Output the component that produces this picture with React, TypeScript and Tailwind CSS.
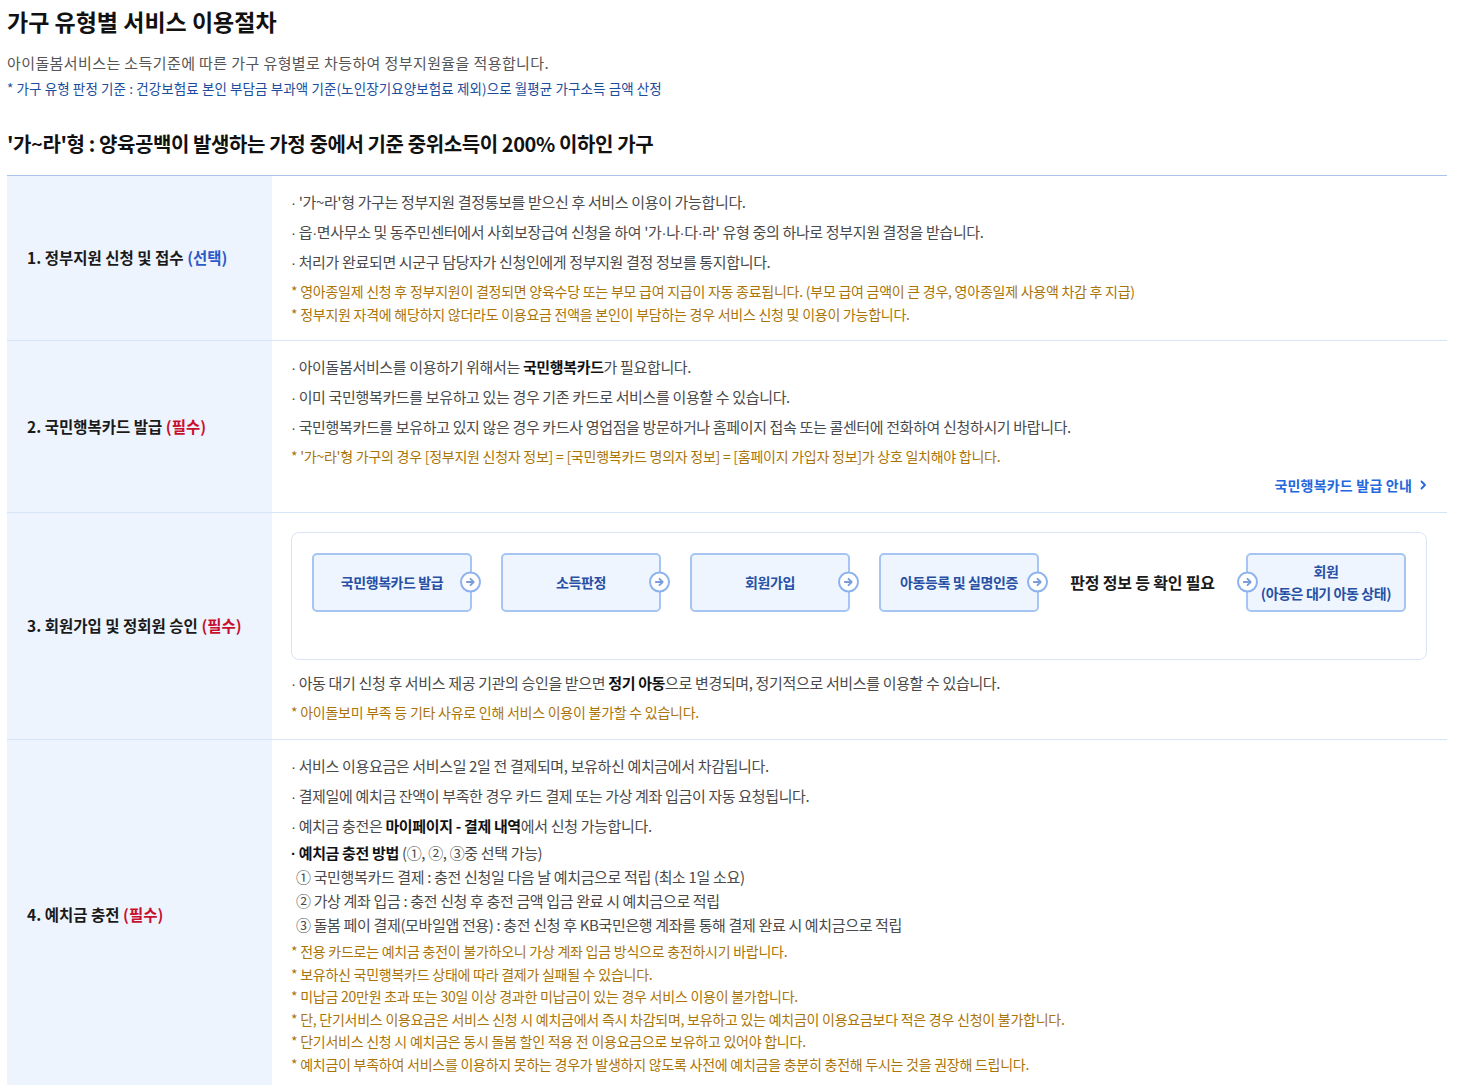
import React from "react";

function Dot() {
  return <span className="font-['Liberation_Sans',sans-serif] leading-none">·</span>;
}

function Bullet({ children }: { children: React.ReactNode }) {
  return (
    <p className="h-[30px] leading-[30px] text-[15px] tracking-[-0.35px] text-[#4a4a4a]">
      <Dot /> {children}
    </p>
  );
}

function Note({ children }: { children: React.ReactNode }) {
  return <p className="leading-[22.5px] text-[14px] tracking-[-0.25px] text-[#aa7407]">* {children}</p>;
}

function ArrowCircle({ side }: { side: "left" | "right" }) {
  return (
    <span
      className={
        "absolute top-1/2 -translate-y-1/2 w-[21px] h-[21px] rounded-full bg-white border-2 border-[#8db2ef] flex items-center justify-center " +
        (side === "right" ? "-right-[11px]" : "-left-[11px]")
      }
    >
      <svg width="11" height="11" viewBox="0 0 12 12" fill="none">
        <path d="M2 6h7.5M6 2.5L9.5 6 6 9.5" stroke="#7a9cd8" strokeWidth="2" strokeLinecap="round" strokeLinejoin="round" />
      </svg>
    </span>
  );
}

function FlowBox({ children, arrow }: { children: React.ReactNode; arrow: "left" | "right" }) {
  return (
    <div className="relative w-[160px] h-[59px] shrink-0 rounded-[5px] border-2 border-[#a7c5f3] bg-[#eef5ff] flex items-center justify-center text-center text-[14px] font-bold leading-[22px] tracking-[-0.4px] text-[#2750a5]">
      {children}
      <ArrowCircle side={arrow} />
    </div>
  );
}

function Row({ label, tag, tagColor, children, className }: { label: string; tag: string; tagColor: string; children: React.ReactNode; className?: string }) {
  return (
    <div className="flex border-b border-[#d6e4f8]">
      <div className="w-[265px] shrink-0 bg-[#edf4fe] flex items-center pl-5 text-[15.5px] font-bold text-[#1a1a1a]">
        {label}&nbsp;<span className={tagColor}>{tag}</span>
      </div>
      <div className={"flex-1 pl-[19px] pr-5 " + (className ?? "pt-[11px] pb-[15px]")}>{children}</div>
    </div>
  );
}

export default function App() {
  return (
    <div className="font-['Noto_Sans_CJK_KR','Noto_Sans',sans-serif] bg-white w-[1461px] min-h-[1085px] pl-[7px] pr-[14px] pt-[5px] text-[#111]">
      <h1 className="text-[23px] font-bold leading-[32px] text-[#111]">가구 유형별 서비스 이용절차</h1>
      <p className="mt-[15px] text-[15px] tracking-[0.4px] leading-[22px] text-[#555]">
        아이돌봄서비스는 소득기준에 따른 가구 유형별로 차등하여 정부지원율을 적용합니다.
      </p>
      <p className="mt-[4px] text-[13.5px] tracking-[0.1px] leading-[20px] text-[#1b4d9c]">
        * 가구 유형 판정 기준 : 건강보험료 본인 부담금 부과액 기준(노인장기요양보험료 제외)으로 월평균 가구소득 금액 산정
      </p>
      <h2 className="mt-[31px] text-[20px] font-bold tracking-[-0.4px] leading-[30px] text-[#111]">
        '가~라'형 : 양육공백이 발생하는 가정 중에서 기준 중위소득이 200% 이하인 가구
      </h2>

      <div className="mt-[16px] border-t border-[#a9c4ec]">
        <Row label="1. 정부지원 신청 및 접수" tag="(선택)" tagColor="text-[#2d59c8]">
          <Bullet>'가~라'형 가구는 정부지원 결정통보를 받으신 후 서비스 이용이 가능합니다.</Bullet>
          <Bullet>
            읍<Dot />면사무소 및 동주민센터에서 사회보장급여 신청을 하여 '가<Dot />나<Dot />다<Dot />라' 유형 중의 하나로 정부지원 결정을 받습니다.
          </Bullet>
          <Bullet>처리가 완료되면 시군구 담당자가 신청인에게 정부지원 결정 정보를 통지합니다.</Bullet>
          <div className="mt-[3px]">
            <Note>영아종일제 신청 후 정부지원이 결정되면 양육수당 또는 부모 급여 지급이 자동 종료됩니다. (부모 급여 금액이 큰 경우, 영아종일제 사용액 차감 후 지급)</Note>
            <Note>정부지원 자격에 해당하지 않더라도 이용요금 전액을 본인이 부담하는 경우 서비스 신청 및 이용이 가능합니다.</Note>
          </div>
        </Row>

        <Row label="2. 국민행복카드 발급" tag="(필수)" tagColor="text-[#c8102e]" className="pt-[11px] pb-[12px]">
          <Bullet>
            아이돌봄서비스를 이용하기 위해서는 <b className="text-[#111]">국민행복카드</b>가 필요합니다.
          </Bullet>
          <Bullet>이미 국민행복카드를 보유하고 있는 경우 기존 카드로 서비스를 이용할 수 있습니다.</Bullet>
          <Bullet>국민행복카드를 보유하고 있지 않은 경우 카드사 영업점을 방문하거나 홈페이지 접속 또는 콜센터에 전화하여 신청하시기 바랍니다.</Bullet>
          <div className="mt-[3px]">
            <Note>'가~라'형 가구의 경우 [정부지원 신청자 정보] = [국민행복카드 명의자 정보] = [홈페이지 가입자 정보]가 상호 일치해야 합니다.</Note>
          </div>
          <div className="flex justify-end leading-[30px] mt-[2px]">
            <span className="text-[14px] font-bold tracking-[0.2px] text-[#2368dc] flex items-center gap-[8px]">
              국민행복카드 발급 안내
              <svg width="7" height="10" viewBox="0 0 7 10" fill="none">
                <path d="M1.5 1.5L5 5l-3.5 3.5" stroke="#2368dc" strokeWidth="1.8" strokeLinecap="round" strokeLinejoin="round" />
              </svg>
            </span>
          </div>
        </Row>

        <Row label="3. 회원가입 및 정회원 승인" tag="(필수)" tagColor="text-[#c8102e]" className="pt-[19px] pb-[16px]">
          <div className="rounded-[8px] border border-[#d9e5f7] px-5 pt-5 pb-[47px] flex items-center gap-[29px]">
            <FlowBox arrow="right">국민행복카드 발급</FlowBox>
            <FlowBox arrow="right">소득판정</FlowBox>
            <FlowBox arrow="right">회원가입</FlowBox>
            <FlowBox arrow="right">아동등록 및 실명인증</FlowBox>
            <div className="flex-1 text-center text-[16px] font-bold tracking-[-0.2px] text-[#1a1a1a]">판정 정보 등 확인 필요</div>
            <FlowBox arrow="left">
              회원
              <br />
              (아동은 대기 아동 상태)
            </FlowBox>
          </div>
          <div className="mt-[8px]">
            <Bullet>
              아동 대기 신청 후 서비스 제공 기관의 승인을 받으면 <b className="text-[#111]">정기 아동</b>으로 변경되며, 정기적으로 서비스를 이용할 수 있습니다.
            </Bullet>
            <div className="mt-[3px]">
              <Note>아이돌보미 부족 등 기타 사유로 인해 서비스 이용이 불가할 수 있습니다.</Note>
            </div>
          </div>
        </Row>

        <Row label="4. 예치금 충전" tag="(필수)" tagColor="text-[#c8102e]" className="pt-[11px] pb-[15px]">
          <Bullet>서비스 이용요금은 서비스일 2일 전 결제되며, 보유하신 예치금에서 차감됩니다.</Bullet>
          <Bullet>결제일에 예치금 잔액이 부족한 경우 카드 결제 또는 가상 계좌 입금이 자동 요청됩니다.</Bullet>
          <Bullet>
            예치금 충전은 <b className="text-[#111]">마이페이지 - 결제 내역</b>에서 신청 가능합니다.
          </Bullet>
          <div className="text-[15px] tracking-[-0.35px] leading-[24px] text-[#4a4a4a]">
            <p className="h-[24px]">
              <b className="text-[#111]">
                <Dot /> 예치금 충전 방법
              </b>{" "}
              (①, ②, ③중 선택 가능)
            </p>
            <p className="pl-[5px]">① 국민행복카드 결제 : 충전 신청일 다음 날 예치금으로 적립 (최소 1일 소요)</p>
            <p className="pl-[5px]">② 가상 계좌 입금 : 충전 신청 후 충전 금액 입금 완료 시 예치금으로 적립</p>
            <p className="pl-[5px]">③ 돌봄 페이 결제(모바일앱 전용) : 충전 신청 후 KB국민은행 계좌를 통해 결제 완료 시 예치금으로 적립</p>
          </div>
          <div className="mt-[3px]">
            <Note>전용 카드로는 예치금 충전이 불가하오니 가상 계좌 입금 방식으로 충전하시기 바랍니다.</Note>
            <Note>보유하신 국민행복카드 상태에 따라 결제가 실패될 수 있습니다.</Note>
            <Note>미납금 20만원 초과 또는 30일 이상 경과한 미납금이 있는 경우 서비스 이용이 불가합니다.</Note>
            <Note>단, 단기서비스 이용요금은 서비스 신청 시 예치금에서 즉시 차감되며, 보유하고 있는 예치금이 이용요금보다 적은 경우 신청이 불가합니다.</Note>
            <Note>단기서비스 신청 시 예치금은 동시 돌봄 할인 적용 전 이용요금으로 보유하고 있어야 합니다.</Note>
            <Note>예치금이 부족하여 서비스를 이용하지 못하는 경우가 발생하지 않도록 사전에 예치금을 충분히 충전해 두시는 것을 권장해 드립니다.</Note>
          </div>
        </Row>
      </div>
    </div>
  );
}
